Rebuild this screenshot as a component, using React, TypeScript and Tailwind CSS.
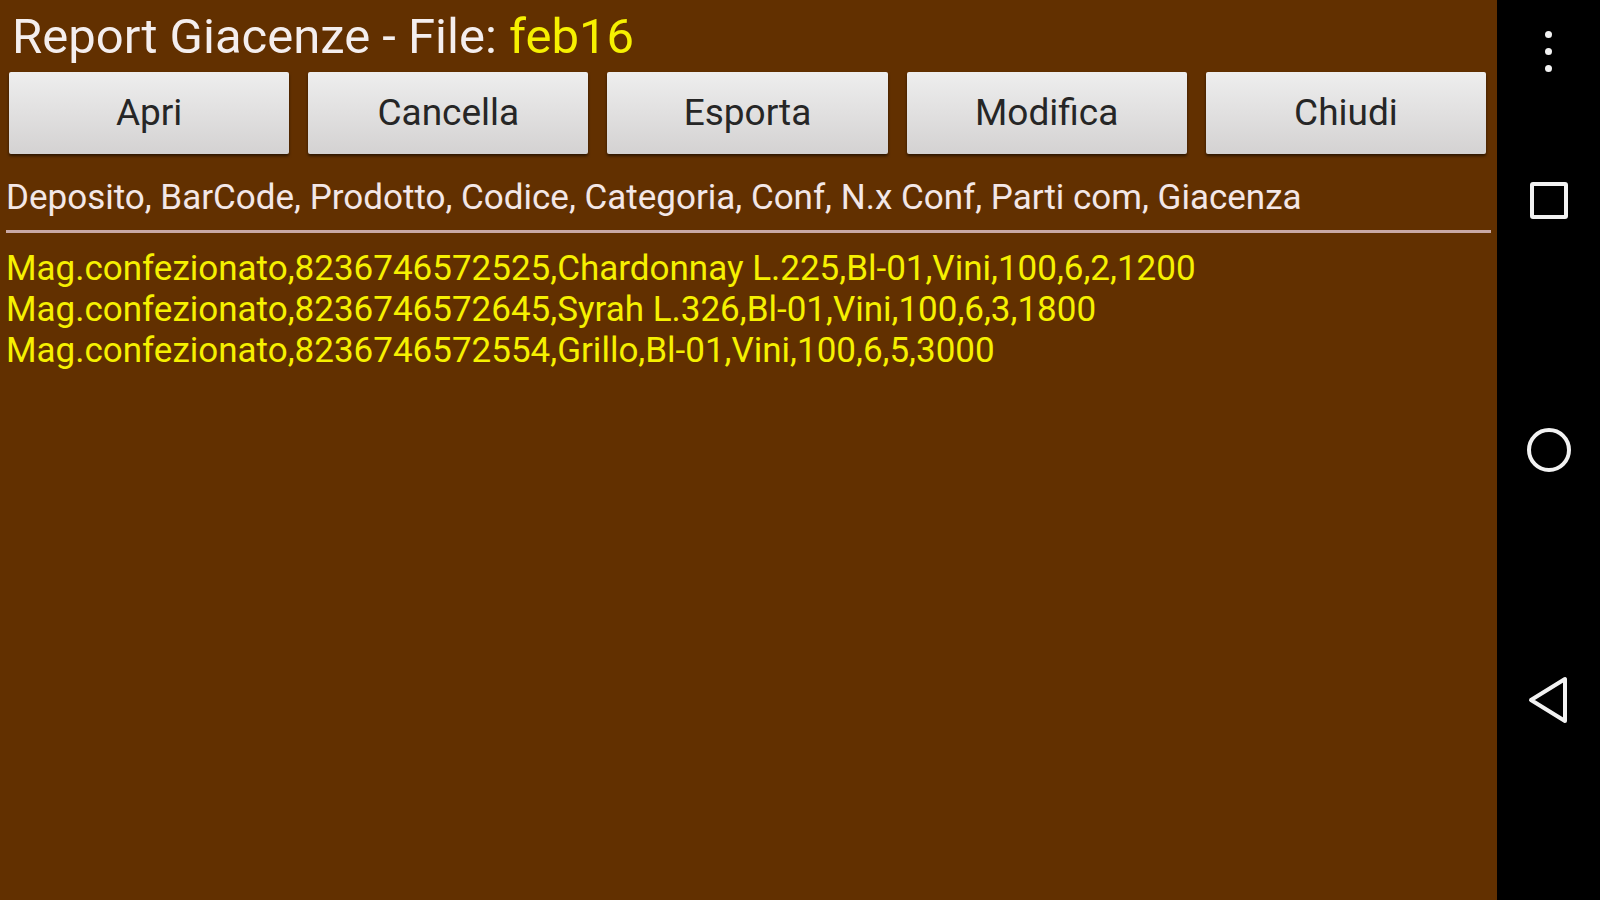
import React from 'react'

const BUTTONS = ['Apri', 'Cancella', 'Esporta', 'Modifica', 'Chiudi']

const HEADER =
  'Deposito, BarCode, Prodotto, Codice, Categoria, Conf, N.x Conf, Parti com, Giacenza'

const ROWS = [
  'Mag.confezionato,8236746572525,Chardonnay L.225,Bl-01,Vini,100,6,2,1200',
  'Mag.confezionato,8236746572645,Syrah L.326,Bl-01,Vini,100,6,3,1800',
  'Mag.confezionato,8236746572554,Grillo,Bl-01,Vini,100,6,5,3000',
]

const font = { fontFamily: 'Roboto, "Noto Sans", sans-serif' }

const NavBar = () => (
  <div className="flex h-full w-[103px] shrink-0 flex-col bg-black">
    {/* overflow menu */}
    <div className="flex h-[102px] flex-col items-center justify-center gap-[10px]">
      <span className="h-[7px] w-[7px] rounded-full bg-[#f2f2f2]" />
      <span className="h-[7px] w-[7px] rounded-full bg-[#f2f2f2]" />
      <span className="h-[7px] w-[7px] rounded-full bg-[#f2f2f2]" />
    </div>
    {/* recents */}
    <div className="flex h-[196px] items-center justify-center">
      <span className="h-[37px] w-[38px] rounded-[3px] border-[4px] border-[#f2f2f2]" />
    </div>
    {/* home */}
    <div className="flex h-[304px] items-center justify-center">
      <span className="h-[44px] w-[44px] rounded-full border-[4px] border-[#f2f2f2]" />
    </div>
    {/* back */}
    <div className="flex h-[196px] items-center justify-center">
      <svg width="44" height="48" viewBox="0 0 44 48" fill="none">
        <path
          d="M38 3 L38 45 L4 24 Z"
          stroke="#f2f2f2"
          strokeWidth="4"
          strokeLinejoin="round"
        />
      </svg>
    </div>
  </div>
)

export default function App() {
  return (
    <div className="flex h-[900px] w-full overflow-hidden" style={font}>
      <div className="flex flex-1 flex-col bg-[#623000]">
        <h1 className="h-[72px] pl-[12px] text-[49px] leading-[74px] font-normal text-[#f4eeee]">
          Report Giacenze - File: <span className="text-[#f6f000]">feb16</span>
        </h1>

        <div className="flex h-[82px] gap-[19px] pr-[11px] pl-[9px]">
          {BUTTONS.map((label) => (
            <button
              key={label}
              className="flex-1 rounded-[2px] bg-gradient-to-b from-[#eeeeee] to-[#d4d2d2] text-[37px] text-[#262626] shadow-[0_2px_3px_rgba(0,0,0,0.55)]"
            >
              {label}
            </button>
          ))}
        </div>

        <p className="mt-[26px] pl-[6px] text-[35px] leading-[36px] text-[#f3e7e7]">
          {HEADER}
        </p>
        <div className="mx-[6px] mt-[14px] h-[3px] bg-[#c9a9a6]" />

        <div className="mt-[15px] pl-[6px]">
          {ROWS.map((row) => (
            <p key={row} className="text-[35px] leading-[41px] text-[#f6f000]">
              {row}
            </p>
          ))}
        </div>
      </div>
      <NavBar />
    </div>
  )
}
